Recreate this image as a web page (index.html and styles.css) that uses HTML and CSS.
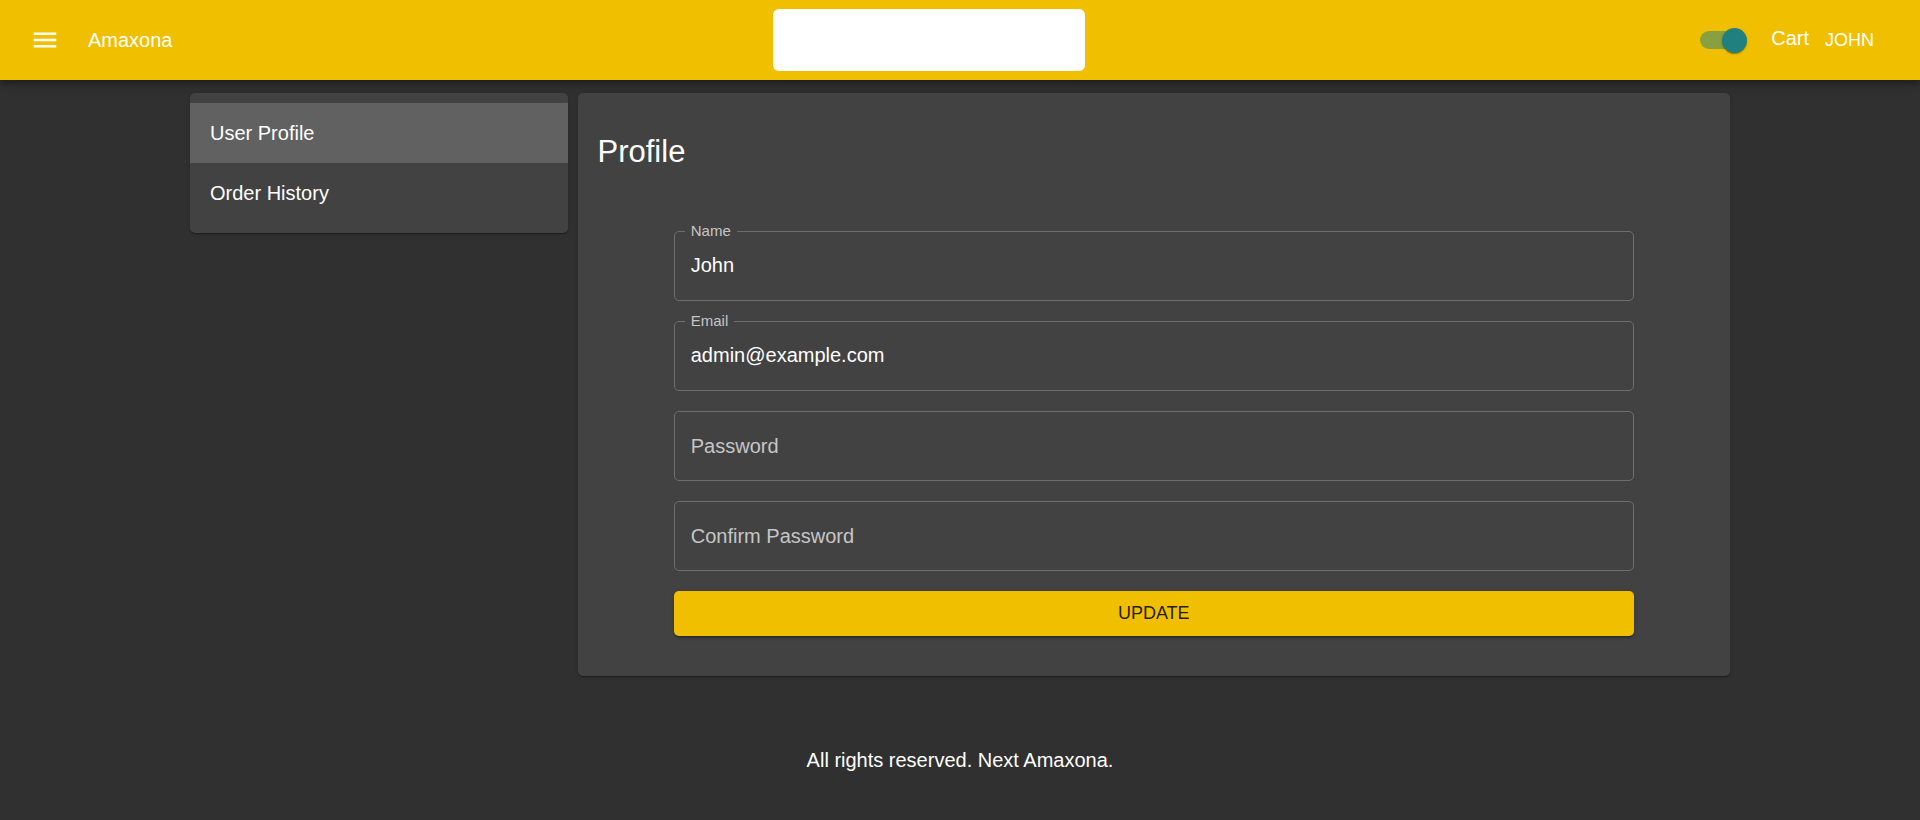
FILE: index.html
```html
<!DOCTYPE html>
<html lang="en">
<head>
<meta charset="utf-8">
<meta name="viewport" content="width=device-width, initial-scale=1">
<title>Profile - Next Amaxona</title>
<link rel="stylesheet" href="styles.css">
</head>
<body>
<header class="navbar">
  <div class="navbar-brand">
    <button class="menu-button" type="button" aria-label="Open menu">
      <svg class="menu-icon" viewBox="0 0 24 24" aria-hidden="true"><path d="M3 18h18v-2H3v2zm0-5h18v-2H3v2zm0-7v2h18V6H3z"/></svg>
    </button>
    <a class="brand" href="#">Amaxona</a>
  </div>
  <form class="search-form" role="search">
    <input class="search-input" type="search" aria-label="Search products">
  </form>
  <div class="navbar-actions">
    <input class="switch" type="checkbox" aria-label="Dark mode" checked>
    <a class="cart-link" href="#">Cart</a>
    <button class="user-button" type="button">JOHN</button>
  </div>
</header>

<main class="container">
  <nav class="card side-nav">
    <a class="side-link side-link-active" href="#">User Profile</a>
    <a class="side-link" href="#">Order History</a>
  </nav>
  <section class="card profile">
    <h1 class="profile-title">Profile</h1>
    <form class="profile-form">
      <div class="field">
        <input class="field-input" id="name" type="text" value="John">
        <label class="field-label field-label-raised" for="name">Name</label>
      </div>
      <div class="field">
        <input class="field-input" id="email" type="email" value="admin@example.com">
        <label class="field-label field-label-raised" for="email">Email</label>
      </div>
      <div class="field">
        <input class="field-input" id="password" type="password">
        <label class="field-label" for="password">Password</label>
      </div>
      <div class="field">
        <input class="field-input" id="confirm" type="password">
        <label class="field-label" for="confirm">Confirm Password</label>
      </div>
      <button class="submit-button" type="submit">UPDATE</button>
    </form>
  </section>
</main>

<footer class="footer">All rights reserved. Next Amaxona.</footer>
</body>
</html>
```
FILE: styles.css
```css
* {
  box-sizing: border-box;
}

body {
  margin: 0;
  background: #303030;
  color: #fff;
  font: 20px/30px "Liberation Sans", Arial, sans-serif;
}

a {
  color: inherit;
  text-decoration: none;
}

button,
input {
  font: inherit;
}

button {
  border: 0;
  color: inherit;
  cursor: pointer;
}

.navbar {
  position: relative;
  display: flex;
  align-items: center;
  justify-content: space-between;
  min-height: 80px;
  padding: 0 30px;
  background: #f0c000;
  box-shadow: 0 2px 5px -1px rgba(0, 0, 0, 0.2), 0 5px 6px rgba(0, 0, 0, 0.14), 0 1px 12px rgba(0, 0, 0, 0.2);
}

.navbar-brand {
  display: flex;
  align-items: center;
  gap: 28px;
}

.menu-button {
  display: flex;
  padding: 0;
  background: none;
}

.menu-icon {
  width: 30px;
  height: 30px;
  fill: #fff;
}

.search-input {
  display: block;
  width: 312px;
  height: 62px;
  padding: 0 16px;
  border: 0;
  border-radius: 6px;
  background: #fff;
  color: #000;
}

.navbar-actions {
  display: flex;
  align-items: center;
  padding-left: 14px;
}

.switch {
  position: relative;
  width: 47px;
  height: 25px;
  margin: 0 24px 0 0;
  appearance: none;
  cursor: pointer;
}

.switch::before {
  content: "";
  position: absolute;
  top: 3px;
  left: 0;
  width: 43px;
  height: 18px;
  border-radius: 9px;
  background: #88a040;
}

.switch::after {
  content: "";
  position: absolute;
  top: 0;
  right: 0;
  width: 25px;
  height: 25px;
  border-radius: 50%;
  background: #208080;
  box-shadow: 0 2px 1px -1px rgba(0, 0, 0, 0.2), 0 1px 1px rgba(0, 0, 0, 0.14), 0 1px 4px rgba(0, 0, 0, 0.12);
}

.cart-link {
  padding-bottom: 4px;
}

.user-button {
  padding: 8px 16px;
  background: none;
  font-size: 18px;
}

.container {
  display: grid;
  grid-template-columns: repeat(12, 1fr);
  align-items: start;
  gap: 10px;
  max-width: 1600px;
  margin: 13px auto 0;
  padding: 0 30px;
}

.card {
  padding: 10px 0;
  border-radius: 5px;
  background: #424242;
  box-shadow: 0 2px 1px -1px rgba(0, 0, 0, 0.2), 0 1px 1px rgba(0, 0, 0, 0.14), 0 1px 4px rgba(0, 0, 0, 0.12);
}

.side-nav {
  grid-column: span 3;
}

.side-link {
  display: block;
  padding: 15px 20px;
}

.side-link-active {
  background: #616161;
}

.profile {
  grid-column: span 9;
  padding-bottom: 40px;
}

.profile-title {
  margin: 0;
  padding: 30px 20px;
  font-size: 31px;
  font-weight: 400;
  line-height: 38px;
}

.profile-form {
  display: flex;
  flex-direction: column;
  gap: 20px;
  max-width: 1000px;
  margin: 0 auto;
  padding: 30px 20px 0;
}

.field {
  position: relative;
}

.field-input {
  display: block;
  width: 100%;
  height: 70px;
  padding: 0 16px 2px;
  border: 1px solid #6e6e6e;
  border-radius: 5px;
  background: none;
  color: #fff;
}

.field-label {
  position: absolute;
  top: 20px;
  left: 17px;
  color: #c6c6c6;
}

.field-label-raised {
  top: -10px;
  left: 11px;
  padding: 0 6px;
  background: #424242;
  font-size: 15px;
  line-height: 20px;
}

.submit-button {
  padding: 8px 20px;
  border-radius: 5px;
  background: #f0c000;
  color: rgba(0, 0, 0, 0.87);
  font-size: 18px;
  line-height: 29px;
  box-shadow: 0 3px 1px -2px rgba(0, 0, 0, 0.2), 0 2px 2px rgba(0, 0, 0, 0.14), 0 1px 5px rgba(0, 0, 0, 0.12);
}

.footer {
  padding: 69px 20px 16px;
  text-align: center;
}
```
